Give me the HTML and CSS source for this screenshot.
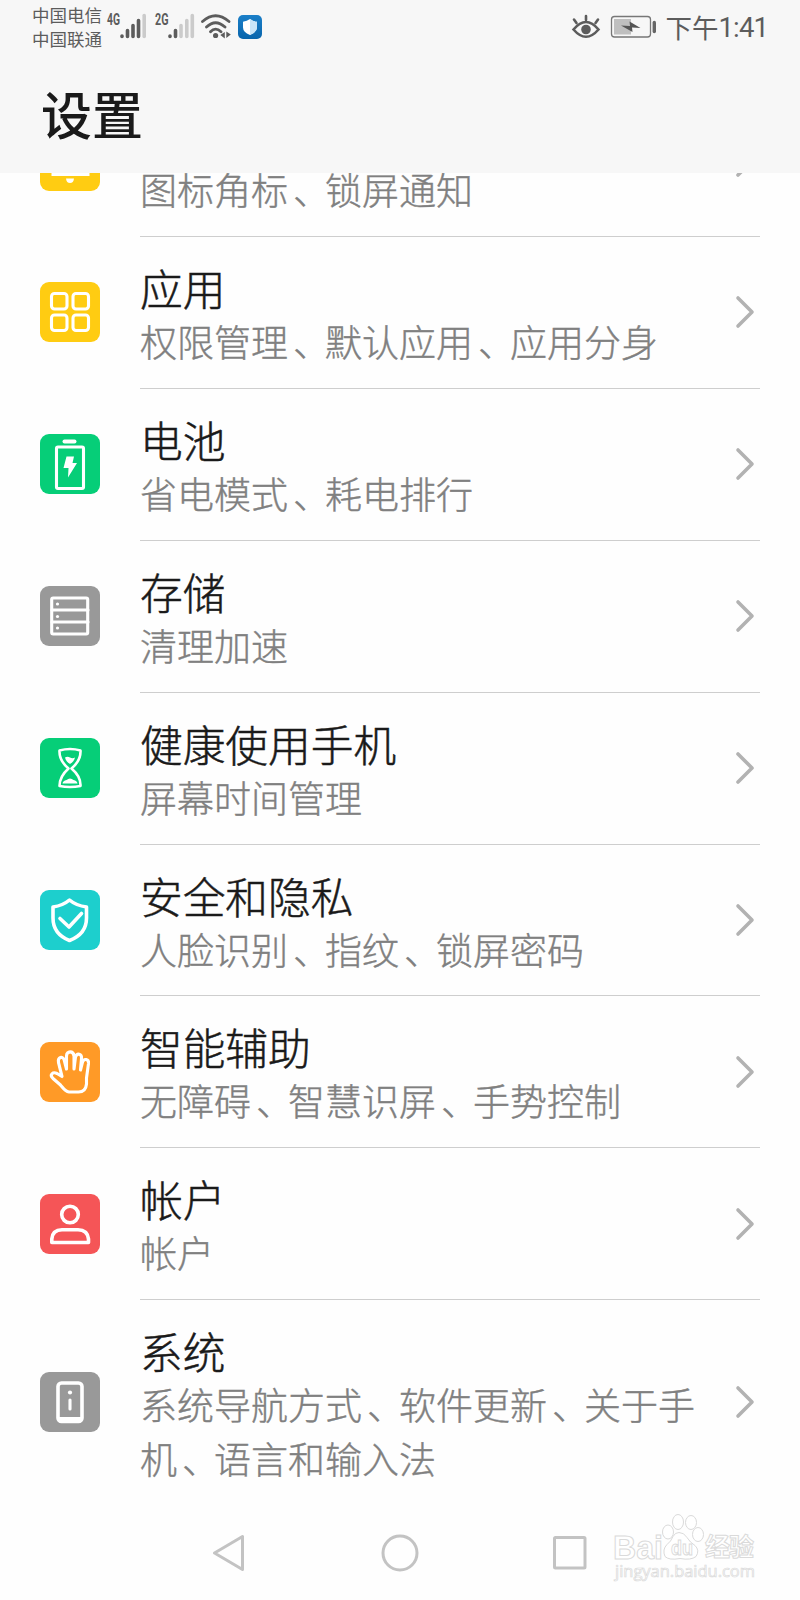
FILE: index.html
```html
<!DOCTYPE html>
<html lang="zh-CN">
<head>
<meta charset="utf-8">
<title>设置</title>
<link rel="stylesheet" href="styles.css">
</head>
<body>
<div class="screen">
  <header class="header">
    <div class="status">
      <div class="carriers"><span>中国电信</span><span>中国联通</span></div>
      <svg class="signals" width="157" height="36" viewBox="0 0 157 36">
        <g class="net"><text x="1" y="16" textLength="13" lengthAdjust="spacingAndGlyphs">4G</text><text x="49" y="16" textLength="13.500" lengthAdjust="spacingAndGlyphs">2G</text></g>
        <g class="bar">
          <path d="M16 27v.5M21.500 21.500v6M27 16.500v11M32.500 11.500v16"/>
          <path class="off" d="M38.200 6.500v21"/>
          <path d="M64 27v.5M69.500 21.500v6"/>
          <path class="off" d="M75 16.500v11M80.800 11.500v16M86.300 6.500v21"/>
        </g>
        <g class="wave">
          <path d="M96.500 12.500Q109.500 1 123 12.500M100.500 18Q109.500 9.500 119 18M104.500 22.800Q109.500 17.500 115 22.800"/>
          <circle cx="109.600" cy="26.500" r="2.600"/>
          <path class="solid" d="M118.800 23v6.500l-4.500-3.500zM120.300 22.500v6.500l4.500-3.500z"/>
        </g>
        <defs><linearGradient id="blue" x2="0" y2="1"><stop stop-color="#1b7fc8"/><stop offset="1" stop-color="#0865ac"/></linearGradient></defs>
        <rect x="132" y="6" width="24" height="24" rx="5" fill="url(#blue)"/>
        <path d="M144 10q3 2.300 7 2.800v5.700q0 4.500-7 7.500-7-3-7-7.500v-5.700q4-.5 7-2.800z" fill="#fff"/>
        <path d="M144 10q3 2.300 7 2.800v5.700q0 4.500-7 7.500z" fill="#c9e5f8"/>
      </svg>
      <svg class="system" width="86" height="26" viewBox="0 0 86 26">
        <g fill="none" stroke="#5c5c5c" stroke-width="2.600" stroke-linecap="round">
          <path d="M2.500 16.500Q15 1.500 27.500 16.500Q15 31 2.500 16.500zM15 7V3M5.500 10L3 6.500M24.500 10L27 6.500"/>
          <circle cx="15" cy="16.500" r="4.800" fill="#5c5c5c" stroke="none"/>
        </g>
        <rect x="40.500" y="3.500" width="39" height="20.500" rx="3" fill="none" stroke="#777" stroke-width="1.300"/>
        <rect x="43" y="6" width="17" height="15.500" fill="#bfbfbf"/>
        <path d="M50 12.500l9 .5-.5-4.500 11 6.500-8.500-.5 .5 4.500z" fill="#555"/>
        <path d="M83.300 9.500v9" stroke="#666" stroke-width="3.400" stroke-linecap="round"/>
      </svg>
      <div class="time">下午<span>1:41</span></div>
    </div>
    <h1 class="heading">设置</h1>
  </header>

  <main class="viewport">
    <div class="list">
      <div class="row">
        <svg class="icon yellow" viewBox="0 0 60 60"><path d="M11.500 30v15h38V30z" fill="#fff"/><path d="M26 47.500h8q-.5 4.500-4 4.500t-4-4.500z" fill="#fff"/></svg>
        <div class="body"><div class="text"><div class="name">通知</div><div class="desc">图标角标<span class="sep">、</span>锁屏通知</div></div><svg class="chevron" viewBox="0 0 20 34"><path d="M3 3l14 14L3 31"/></svg></div>
      </div>
      <div class="row">
        <svg class="icon yellow" viewBox="0 0 60 60"><g><rect x="11.500" y="11.500" width="15.500" height="15.500" rx="3"/><rect x="33" y="11.500" width="15.500" height="15.500" rx="3"/><rect x="11.500" y="33" width="15.500" height="15.500" rx="3"/><rect x="33" y="33" width="15.500" height="15.500" rx="3"/></g></svg>
        <div class="body"><div class="text"><div class="name">应用</div><div class="desc">权限管理<span class="sep">、</span>默认应用<span class="sep">、</span>应用分身</div></div><svg class="chevron" viewBox="0 0 20 34"><path d="M3 3l14 14L3 31"/></svg></div>
      </div>
      <div class="row">
        <svg class="icon green" viewBox="0 0 60 60"><g><rect x="16.500" y="13" width="27" height="41.500" rx="1.500"/><path d="M24.500 7.500h10" stroke-width="4"/></g><path d="M26.500 22.500h7.500l-1.500 6.500h4.500L28 43.500l.5-9.500h-5z" fill="#fff"/></svg>
        <div class="body"><div class="text"><div class="name">电池</div><div class="desc">省电模式<span class="sep">、</span>耗电排行</div></div><svg class="chevron" viewBox="0 0 20 34"><path d="M3 3l14 14L3 31"/></svg></div>
      </div>
      <div class="row">
        <svg class="icon gray" viewBox="0 0 60 60"><g><rect x="11.700" y="12" width="36" height="36" rx="1.500"/><path d="M12 24h36M12 36h36"/></g><g class="dots"><circle cx="17.500" cy="18" r="1.600"/><circle cx="17.500" cy="30.500" r="1.600"/><circle cx="17.500" cy="42" r="1.600"/></g></svg>
        <div class="body"><div class="text"><div class="name">存储</div><div class="desc">清理加速</div></div><svg class="chevron" viewBox="0 0 20 34"><path d="M3 3l14 14L3 31"/></svg></div>
      </div>
      <div class="row">
        <svg class="icon green" viewBox="0 0 60 60"><g class="fine"><path d="M19.500 12.500Q30 9.500 40.500 12.500Q41 22.500 31.500 30.500Q41 38.500 40.500 48Q30 50 19.500 48Q19.500 38.500 28.500 30.500Q19 22.500 19.500 12.500z"/></g><path d="M25 19.500q2.500-1.500 5 0t5 0q-1 4-5 6.500-4-2.500-5-6.500zM22.500 45.500q.5-3 4-3.500 3.500-3 7 0 3.500.5 4 3.500z" fill="#fff"/></svg>
        <div class="body"><div class="text"><div class="name">健康使用手机</div><div class="desc">屏幕时间管理</div></div><svg class="chevron" viewBox="0 0 20 34"><path d="M3 3l14 14L3 31"/></svg></div>
      </div>
      <div class="row">
        <svg class="icon cyan" viewBox="0 0 60 60"><g class="bold"><path d="M29.500 10Q36 15.500 46.500 17V28Q46.500 44 29.500 50.500Q13 44 13 28V17Q23 15.500 29.500 10zM20 28.500l9 8.500 12.500-13.500"/></g></svg>
        <div class="body"><div class="text"><div class="name">安全和隐私</div><div class="desc">人脸识别<span class="sep">、</span>指纹<span class="sep">、</span>锁屏密码</div></div><svg class="chevron" viewBox="0 0 20 34"><path d="M3 3l14 14L3 31"/></svg></div>
      </div>
      <div class="row">
        <svg class="icon orange" viewBox="0 0 60 60"><g><path d="M22 34.500L18.500 20.500C17.500 15 22.800 13.500 24.200 18L26.500 27L26.500 14C26.500 8.500 33.500 8.500 34 14L34 27L35.500 15C37 10.500 42 11.500 41.500 16.500L40.500 28L42.500 20C44 16 49 17 48.500 21.500L46.500 36V42C46 47 43 50 38.500 50H29C25 49.500 23 46 20.500 43L13 36.500C9 32.500 13 29.500 17 31.500z"/></g></svg>
        <div class="body"><div class="text"><div class="name">智能辅助</div><div class="desc">无障碍<span class="sep">、</span>智慧识屏<span class="sep">、</span>手势控制</div></div><svg class="chevron" viewBox="0 0 20 34"><path d="M3 3l14 14L3 31"/></svg></div>
      </div>
      <div class="row">
        <svg class="icon red" viewBox="0 0 60 60"><g class="bold"><circle cx="30" cy="20.500" r="8.300"/><path d="M11.800 48.500V45Q12.500 36 22 35.800H38Q47.500 36 48.500 45V48.500z"/></g></svg>
        <div class="body"><div class="text"><div class="name">帐户</div><div class="desc">帐户</div></div><svg class="chevron" viewBox="0 0 20 34"><path d="M3 3l14 14L3 31"/></svg></div>
      </div>
      <div class="row">
        <svg class="icon gray" viewBox="0 0 60 60"><g class="bold"><rect x="18" y="11" width="24" height="38.500" rx="3.500"/></g><path d="M18 45h24v3q-1 2.500-3 2.500H21q-2 0-3-2.500z" fill="#fff"/><g><path d="M30 28v9"/></g><circle cx="30" cy="20.500" r="2.100" fill="#fff"/></svg>
        <div class="body last"><div class="text"><div class="name">系统</div><div class="desc">系统导航方式<span class="sep">、</span>软件更新<span class="sep">、</span>关于手机<span class="sep">、</span>语言和输入法</div></div><svg class="chevron" viewBox="0 0 20 34"><path d="M3 3l14 14L3 31"/></svg></div>
      </div>
    </div>
  </main>

  <nav class="nav">
    <svg width="34" height="40" viewBox="0 0 34 40"><path d="M1.500 20L29.500 3.500v33z"/></svg>
    <svg width="40" height="40" viewBox="0 0 40 40"><circle cx="20" cy="20" r="17"/></svg>
    <svg width="36" height="40" viewBox="0 0 36 40"><rect x="2.500" y="4.500" width="30.500" height="30.500" rx="1"/></svg>
  </nav>

  <svg class="watermark" width="160" height="76" viewBox="0 0 160 76">
    <g class="outline">
      <text x="8" y="47" font-size="33" textLength="50" lengthAdjust="spacingAndGlyphs">Bai</text>
      <ellipse cx="63" cy="20" rx="5.500" ry="7"/><ellipse cx="73" cy="10" rx="5.500" ry="7.500"/><ellipse cx="86" cy="10.500" rx="5.500" ry="7"/><ellipse cx="93" cy="22.500" rx="5.500" ry="7"/>
      <path d="M74 20.500Q79 20.500 82 25.500Q85 30.500 90 33.500Q95 38.500 91 44.500Q86 48.500 75 46.500Q64 48.500 60 44.500Q57 37.500 62 32.500Q66 29.500 68 24.500Q70 20.500 74 20.500z"/>
      <text x="66" y="43" font-size="21" textLength="22" lengthAdjust="spacingAndGlyphs">du</text>
      <text class="cjk" x="100" y="44" font-size="25" textLength="49">经验</text>
      <text x="10" y="65" font-size="16" class="url" textLength="140" lengthAdjust="spacingAndGlyphs">jingyan.baidu.com</text>
    </g>
  </svg>
</div>
</body>
</html>
```

FILE: styles.css
```css
body {
  margin: 0;
  font-family: "Noto Sans CJK SC", sans-serif;
  color: #1a1a1a;
  background: #fefefe;
}
.screen {
  position: relative;
  width: 800px;
  height: 1600px;
  display: flex;
  flex-direction: column;
  overflow: hidden;
}
.header {
  flex: none;
  box-sizing: border-box;
  height: 173px;
  background: #f7f7f7;
}
.status {
  display: flex;
  align-items: flex-start;
  box-sizing: border-box;
  height: 58px;
  padding: 3px 33px 0 32px;
  color: #5c5c5c;
}
.carriers {
  display: flex;
  flex-direction: column;
  width: 74px;
  font-size: 17.5px;
  line-height: 24px;
  white-space: nowrap;
}
.signals {
  margin-top: 6px;
  flex: none;
}
.net {
  font: bold 16px Roboto, sans-serif;
  fill: #5c5c5c;
}
.bar {
  fill: none;
  stroke: #5c5c5c;
  stroke-width: 3.6;
  stroke-linecap: round;
}
.bar .off {
  stroke: #cbcbcb;
}
.wave {
  fill: none;
  stroke: #5c5c5c;
  stroke-width: 2.8;
  stroke-linecap: round;
}
.wave circle,
.wave .solid {
  fill: #5c5c5c;
  stroke: none;
}
.system {
  margin: 10px 8.5px 0 auto;
  flex: none;
}
.time {
  display: flex;
  margin-right: -1px;
  font-size: 26.5px;
  line-height: 48px;
}
.time span {
  padding-top: 1px;
  font-family: Roboto, sans-serif;
  font-size: 27.5px;
  letter-spacing: -.9px;
}
.heading {
  margin: 19px 0 0 41px;
  font-size: 51px;
  line-height: 72px;
  font-weight: 500;
}
.viewport {
  flex: none;
  height: 1337px;
  overflow: hidden;
}
.list {
  margin-top: -87.7px;
}
.row {
  display: flex;
  align-items: center;
  gap: 40px;
  padding: 0 40px;
}
.icon {
  flex: none;
  width: 60px;
  height: 60px;
  margin-top: -1.4px;
  border-radius: 9px;
}
.icon g {
  fill: none;
  stroke: #fff;
  stroke-width: 3.1;
  stroke-linejoin: round;
  stroke-linecap: round;
}
.icon .fine {
  stroke-width: 2.6;
}
.icon .bold {
  stroke-width: 3.6;
}
.icon .dots {
  fill: #fff;
  stroke: none;
}
.yellow { background: #ffcc12; }
.green { background: #06ce78; }
.gray { background: #999; }
.cyan { background: #1dcfcd; }
.orange { background: #ff9a27; }
.red { background: #f55557; }
.body {
  flex: 1;
  display: flex;
  align-items: center;
  box-sizing: border-box;
  min-height: 151.87px;
  padding: 24px 5px 19.87px 0;
  border-bottom: 1px solid #cecece;
}
.last {
  border-bottom: 0;
}
.text {
  width: 560px;
}
.name {
  font-size: 42.7px;
  line-height: 52px;
  font-weight: 300;
  -webkit-text-stroke: .5px;
}
.desc {
  margin-top: 1px;
  font-size: 37px;
  line-height: 54px;
  font-weight: 300;
  color: #808080;
  -webkit-text-stroke: .4px;
}
.sep {
  padding-left: 5px;
  margin-right: -5px;
}
.chevron {
  width: 20px;
  height: 34px;
  margin: -4.6px 0 0 auto;
  fill: none;
  stroke: #b2b2b2;
  stroke-width: 3.6;
  stroke-linecap: round;
  stroke-linejoin: round;
}
.nav {
  flex: 1;
  display: grid;
  grid-template-columns: repeat(3, 170px);
  justify-content: center;
  justify-items: center;
  align-items: center;
  padding-bottom: 5px;
}
.nav svg {
  fill: none;
  stroke: #c3c3c3;
  stroke-width: 3;
  stroke-linejoin: round;
}
.watermark {
  position: absolute;
  left: 605px;
  top: 1512px;
}
.outline {
  fill: #fff;
  stroke: #dadada;
  stroke-width: 1;
  font-family: "Liberation Sans", sans-serif;
  font-weight: bold;
}
.outline .cjk {
  font-family: "Noto Sans CJK SC", sans-serif;
}
.outline .url {
  font-family: "Open Sans", sans-serif;
  font-weight: 400;
  stroke-width: .7;
}
```
